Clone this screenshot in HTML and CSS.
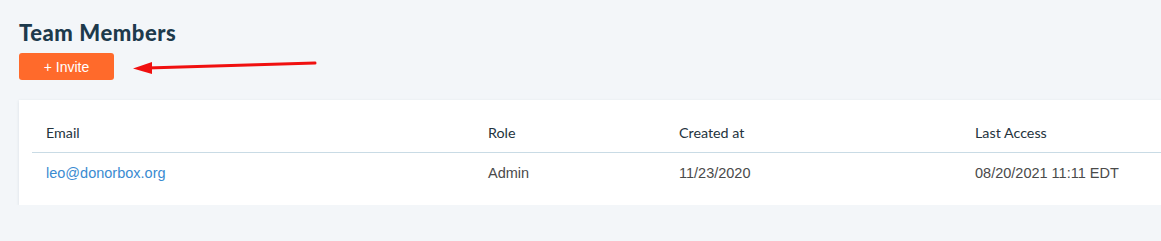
FILE: index.html
```html
<!DOCTYPE html>
<html lang="en">
<head>
    <meta charset="UTF-8">
    <title>Team Members</title>
    <link rel="stylesheet" href="styles.css">
</head>
<body>
    <div class="page">
        <h2 class="page-title">Team Members</h2>
        <div class="actions">
            <button class="invite-btn">+ Invite</button>
            <svg class="pointer-arrow" width="200" height="20" viewBox="0 0 200 20">
                <line x1="182" y1="3" x2="14" y2="8" stroke="#f01010" stroke-width="3" stroke-linecap="round"/>
                <polygon points="0,8.5 19,2 19,14" fill="#f01010"/>
            </svg>
        </div>

        <div class="members-card">
            <table class="members-table">
                <colgroup>
                    <col style="width: 442px">
                    <col style="width: 191px">
                    <col style="width: 296px">
                    <col>
                </colgroup>
                <thead>
                    <tr>
                        <th>Email</th>
                        <th>Role</th>
                        <th>Created at</th>
                        <th>Last Access</th>
                    </tr>
                </thead>
                <tbody>
                    <tr>
                        <td><a href="#">leo@donorbox.org</a></td>
                        <td>Admin</td>
                        <td>11/23/2020</td>
                        <td>08/20/2021 11:11 EDT</td>
                    </tr>
                </tbody>
            </table>
        </div>
    </div>
</body>
</html>
```

FILE: styles.css
```css
body {
    margin: 0;
    background-color: #f3f6f9;
    font-family: 'Liberation Sans', Arial, sans-serif;
    overflow: hidden;
}
.page {
    padding: 20px 0 0 19px;
}
.page-title {
    margin: 0;
    font-family: Lato, 'Liberation Sans', sans-serif;
    font-weight: 900;
    font-size: 22px;
    line-height: 26px;
    color: #1d3a4c;
    letter-spacing: 0.55px;
}
.actions {
    position: relative;
    margin-top: 7px;
    height: 27px;
}
.invite-btn {
    width: 95px;
    height: 27px;
    border: none;
    border-radius: 3px;
    background: #ff6a2b;
    color: white;
    font-family: 'Liberation Sans', Arial, sans-serif;
    font-size: 14px;
    padding: 0;
    cursor: pointer;
}
.pointer-arrow {
    position: absolute;
    left: 114px;
    top: 7px;
}
.members-card {
    margin-top: 20px;
    width: 1200px;
    background: white;
    padding: 17px 13px 12px;
    box-shadow: 0 1px 3px rgba(30, 60, 90, 0.12);
    box-sizing: border-box;
}
.members-table {
    border-collapse: collapse;
    table-layout: fixed;
    width: 100%;
}
.members-table th {
    text-align: left;
    font-family: Lato, 'Liberation Sans', sans-serif;
    font-weight: 400;
    font-size: 14.3px;
    line-height: 20px;
    color: #24333d;
    padding: 6px 14px 9px;
    border-bottom: 1px solid #c9dbe5;
}
.members-table td {
    font-size: 14.5px;
    line-height: 20px;
    color: #4a4a4a;
    padding: 10px 14px;
}
.members-table a {
    color: #3a8bd1;
    text-decoration: none;
}
```
